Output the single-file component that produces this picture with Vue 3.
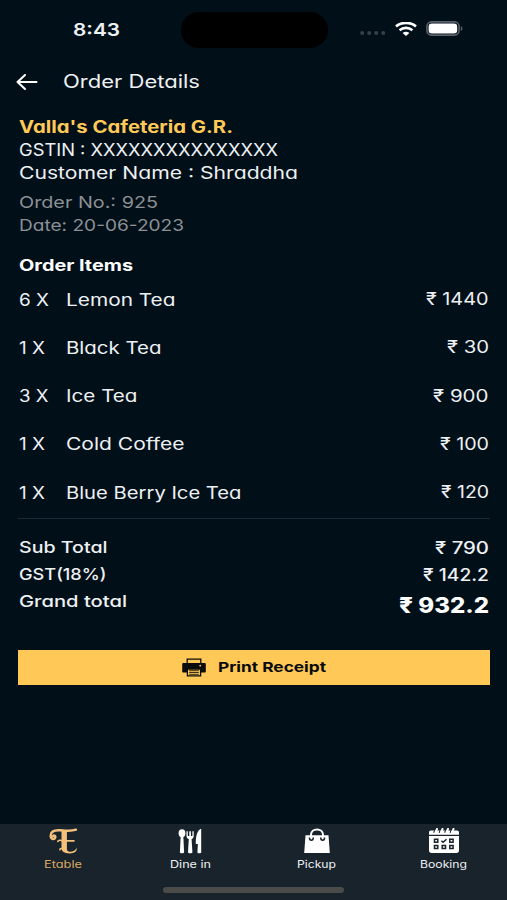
<template>
  <div class="screen">
    <div class="status-bar">
      <div class="clock"><span v-fit="47">8:43</span></div>
      <div class="island"></div>
      <div class="status-icons">
        <svg class="signal" viewBox="0 0 26 4">
          <circle v-for="n in 4" :key="n" :cx="n * 7 - 4.8" cy="2" r="2" />
        </svg>
        <svg class="wifi" viewBox="0 0 22 14">
          <path d="M1 4.4C6.7-.3 15.3-.3 21 4.4" />
          <path d="M4.6 8.2c3.6-3.1 9.2-3.1 12.8 0" />
          <path class="dot" d="M7.6 11c1.9-1.7 4.9-1.7 6.8 0L11 14z" />
        </svg>
        <svg class="battery" viewBox="0 0 37 15">
          <rect class="case" x=".9" y=".9" width="32.2" height="13.2" rx="4.5" />
          <rect class="charge" x="2.6" y="2.6" width="28.6" height="9.8" rx="3.2" />
          <path class="cap" d="M34.8 5.2c2.2.6 2.2 4 0 4.6z" />
        </svg>
      </div>
    </div>

    <header class="header">
      <svg class="back" viewBox="0 0 22 16">
        <path d="M20.5 8h-19M9 1 1.5 8 9 15" />
      </svg>
      <h1><span v-fit="137">Order Details</span></h1>
    </header>

    <main class="content">
      <div class="line shop"><span v-fit="214">Valla's Cafeteria G.R.</span></div>
      <div class="line"><span v-fit="259">GSTIN : XXXXXXXXXXXXXXX</span></div>
      <div class="line"><span v-fit="279">Customer Name : Shraddha</span></div>
      <div class="line muted first"><span v-fit="139">Order No.: 925</span></div>
      <div class="line muted"><span v-fit="165">Date: 20-06-2023</span></div>

      <h2 class="line"><span v-fit="114">Order Items</span></h2>
      <ul class="items">
        <li v-for="item in items" :key="item.name">
          <span class="qty"><span v-fit="item.qtyWidth">{{ item.qty }} X</span></span>
          <span class="name"><span v-fit="item.nameWidth">{{ item.name }}</span></span>
          <span class="price"><span v-fit="item.priceWidth">₹ {{ item.price }}</span></span>
        </li>
      </ul>

      <div class="totals">
        <div class="total">
          <span class="label"><span v-fit="88.5">Sub Total</span></span>
          <span class="price"><span v-fit="54">₹ 790</span></span>
        </div>
        <div class="total">
          <span class="label"><span v-fit="87.5">GST(18%)</span></span>
          <span class="price"><span v-fit="66">₹ 142.2</span></span>
        </div>
        <div class="total grand">
          <span class="label"><span v-fit="108">Grand total</span></span>
          <span class="price"><span v-fit="90">₹ 932.2</span></span>
        </div>
      </div>

      <button class="print">
        <svg viewBox="0 0 24 19">
          <path class="outline" d="M5.2 6V1.2h13.6V6" />
          <path d="M1.5 5h21c.8 0 1.3.5 1.3 1.3v7.2c0 .6-.4 1-1 1H1.2c-.6 0-1-.4-1-1V6.300C.2 5.5.7 5 1.5 5z" />
          <path class="outline" d="M5.4 11h13.200v6.900H5.400z" />
          <path class="lines" d="M7.200 12.700h9.600M7.200 14.500h9.600M7.200 16.300h9.600" />
          <circle class="led" cx="18.2" cy="7.7" r=".9" />
        </svg>
        <span v-fit="108">Print Receipt</span>
      </button>
    </main>

    <nav class="tabs">
      <div class="tab active">
        <svg viewBox="0 0 32 26">
          <path class="swash" d="M6 8.2c1.200-1.400 3-.2 2.200 1.500C7.100 12 3.400 11 3.700 7.500 4 3 8.500 2 13 2.300c6 .4 11 1.200 16-.6" />
          <path d="M14.500 2.500h5.400v18.300c0 2 1 2.900 3 2.900 3.200 0 5.600-1.300 6.800-3.900.5 3.700-2.300 5.600-7.200 5.600-5.200 0-8-1.700-8-5.600z" />
          <path class="hook" d="M16 12.900c-2.200-1-4.600-.8-5.200.5M18 12.900h9M16.500 21.500c-1.500-1.500-3.500-1.200-3.700.3" />
        </svg>
        <span v-fit="38">Etable</span>
      </div>
      <div class="tab">
        <svg viewBox="0 0 32 26">
          <ellipse cx="8" cy="5.200" rx="3.400" ry="4" />
          <path d="M6.700 8h2.600l.8 16.200c0 1.400-4.200 1.400-4.200 0z" />
          <path d="M12.500 3.200h1.300V8h1.500V3.200h1.600V8h1.500V3.200h1.300V8c0 1.600-.9 2.600-2.100 3.100l.8 13.100c0 1.400-4.400 1.400-4.400 0l.8-13.100c-1.400-.5-2.300-1.500-2.300-3.100z" />
          <path d="M27.200.8v23.700c0 1-3.800 1-3.800 0l.5-8.500h-2.100C21.800 9 22.800 2.500 27.200.8z" />
        </svg>
        <span v-fit="41">Dine in</span>
      </div>
      <div class="tab">
        <svg viewBox="0 0 32 26">
          <path d="M4.500 7.200h23L28.800 25H3.200z" />
          <path class="handle" d="M10 8V6.800c0-7.200 12-7.200 12 0V8" />
          <path class="cut" d="M8.400 9.500c0 3.800 3.900 3.800 3.900 0M19.700 9.500c0 3.800 3.900 3.800 3.900 0" />
        </svg>
        <span v-fit="39">Pickup</span>
      </div>
      <div class="tab">
        <svg viewBox="0 0 32 26">
          <path d="M3 2.500h26c1.300 0 2 .7 2 2v2.300H1V4.500c0-1.300.7-2 2-2zM1 8.100h30v14.400c0 1.600-1 2.500-2.500 2.500h-25C2 25 1 24.100 1 22.500z" />
          <path class="gap" d="M5.800 4.700 7.300 1M11.300 4.700 12.800 1M16.800 4.700 18.300 1M22.300 4.700 23.800 1" />
          <path class="ring" d="M7.400 4.200 9 1M12.900 4.200 14.500 1M18.400 4.200 20 1M23.900 4.200 25.500 1" />
          <path class="cut" d="M6.500 11.300h3.300v3H6.500zM21.800 11.300h3.300v3h-3.300zM6.500 17.400h3.300v3H6.500zM14.200 17.400h3.300v3h-3.300zM21.800 17.400h3.300v3h-3.300zM13.400 12.700l1.700 1.500 3.400-3" />
        </svg>
        <span v-fit="47">Booking</span>
      </div>
      <div class="home-indicator"></div>
    </nav>
  </div>
</template>

<script setup>
const items = [
  { qty: 6, name: 'Lemon Tea', price: 1440, qtyWidth: 30, nameWidth: 109.5, priceWidth: 62.5 },
  { qty: 1, name: 'Black Tea', price: 30, qtyWidth: 26, nameWidth: 95.5, priceWidth: 42 },
  { qty: 3, name: 'Ice Tea', price: 900, qtyWidth: 29.5, nameWidth: 71.5, priceWidth: 55.5 },
  { qty: 1, name: 'Cold Coffee', price: 100, qtyWidth: 26, nameWidth: 118.5, priceWidth: 49 },
  { qty: 1, name: 'Blue Berry Ice Tea', price: 120, qtyWidth: 26, nameWidth: 175.5, priceWidth: 48 },
];

// Widens a label so it takes up the given number of pixels
const vFit = {
  mounted(el, { value }) {
    el.style.display = 'inline-block';
    el.style.whiteSpace = 'nowrap';
    const natural = el.getBoundingClientRect().width;
    el.style.width = `${natural}px`;
    el.style.marginRight = `${value - natural}px`;
    el.style.transformOrigin = 'left';
    el.style.transform = `scaleX(${value / natural})`;
  },
};
</script>

<style>
body { background: #010f19; }
</style>

<style scoped>
.screen { display: flex; flex-direction: column; height: 900px; width: 507px; overflow: hidden; background: #010f19; color: #eef1f3; font-family: Inter, "Noto Sans", sans-serif; font-feature-settings: "cv11"; }
svg { display: block; }

.status-bar { display: grid; grid-template-columns: 181px 147px 1fr; height: 60px; flex: none; box-sizing: border-box; padding-top: 12px; }
.clock { padding-left: 72.5px; font-size: 17.5px; line-height: 35px; font-weight: 600; }
.island { height: 35.5px; border-radius: 18px; background: #000; }
.status-icons { display: flex; align-items: center; height: 33px; padding-left: 32px; }
.signal { width: 26px; height: 4px; margin-top: 9px; fill: #35414a; }
.wifi { width: 22px; height: 14px; margin-left: 9px; margin-right: 9px; fill: none; stroke: #fff; stroke-width: 2.7; }
.wifi .dot { fill: #fff; stroke: none; }
.battery { width: 37px; height: 15px; }
.case { fill: none; stroke: #59626a; stroke-width: 1.6; }
.charge { fill: #fff; }
.cap { fill: #59626a; }

.header { display: flex; align-items: center; height: 43px; flex: none; padding-left: 16px; }
.back { width: 22px; height: 16px; margin-right: 25px; fill: none; stroke: #fff; stroke-width: 2; stroke-linecap: round; stroke-linejoin: round; }
h1 { margin: 0; font-size: 18px; line-height: 45px; font-weight: 400; }

.content { flex: 1; padding: 13px 17.5px 0 18px; }
.line { height: 23px; padding-left: 0.5px; line-height: 23px; font-size: 17px; }
.shop { color: #ffc957; font-size: 16.8px; font-weight: 700; }
.muted { color: #8c9195; font-size: 16.5px; }
.first { margin-top: 5.5px; }
h2.line { margin: 17px 0 0; font-size: 15.8px; font-weight: 700; color: #fff; }

.items { margin: 0; padding: 0; list-style: none; border-bottom: 1.5px solid #1b2a34; }
.items li { display: flex; height: 48.3px; padding: 0 1px 0 0.5px; line-height: 47.4px; font-size: 16.8px; }
.qty { width: 47px; }
.name { flex: 1; }
.items .price { margin-top: -0.5px; }

.totals { padding-top: 15px; }
.total { display: flex; justify-content: space-between; height: 27px; padding: 0 1px 0 0.5px; line-height: 27px; font-size: 16px; font-weight: 500; }
.total .price { padding-top: 0.7px; font-size: 16.8px; }
.grand .price { padding-top: 4px; font-size: 21px; font-weight: 800; color: #fff; }

.print { display: flex; align-items: center; justify-content: center; gap: 12px; width: 100%; height: 35px; margin-top: 35px; padding: 0; border: 0; background: #ffc857; color: #080b0d; font: inherit; font-size: 13.8px; font-weight: 700; font-feature-settings: inherit; }
.print svg { width: 24px; height: 19px; fill: #0b0c0d; }
.print .outline { fill: #ffc857; stroke: #0b0c0d; stroke-width: 1.3; }
.print .lines { fill: none; stroke: #3c321d; stroke-width: 1; }
.print .led { fill: #ffc857; }

.tabs { display: grid; grid-template-columns: repeat(4, 1fr); grid-template-rows: 63px 6px; height: 76px; flex: none; background: #18232c; }
.tab { display: flex; flex-direction: column; align-items: center; padding: 4px 0 0; font-size: 10.6px; line-height: 16px; }
.tab svg { width: 32px; height: 26px; margin-bottom: 3px; fill: #fff; }
.active { color: #dca963; }
.active svg { fill: #f3c17c; }
.swash, .hook { fill: none; stroke: #f3c17c; stroke-width: 2.4; stroke-linecap: round; }
.hook { stroke-width: 1.6; }
.handle { fill: none; stroke: #fff; stroke-width: 2; }
.cut { fill: none; stroke: #18232c; stroke-width: 1.5; }
.gap { fill: none; stroke: #18232c; stroke-width: 1.4; }
.ring { fill: none; stroke: #fff; stroke-width: 2; stroke-linecap: round; }
.home-indicator { grid-column: 1 / -1; justify-self: center; width: 181px; height: 5.5px; border-radius: 3px; background: #4b4b4a; }
</style>
